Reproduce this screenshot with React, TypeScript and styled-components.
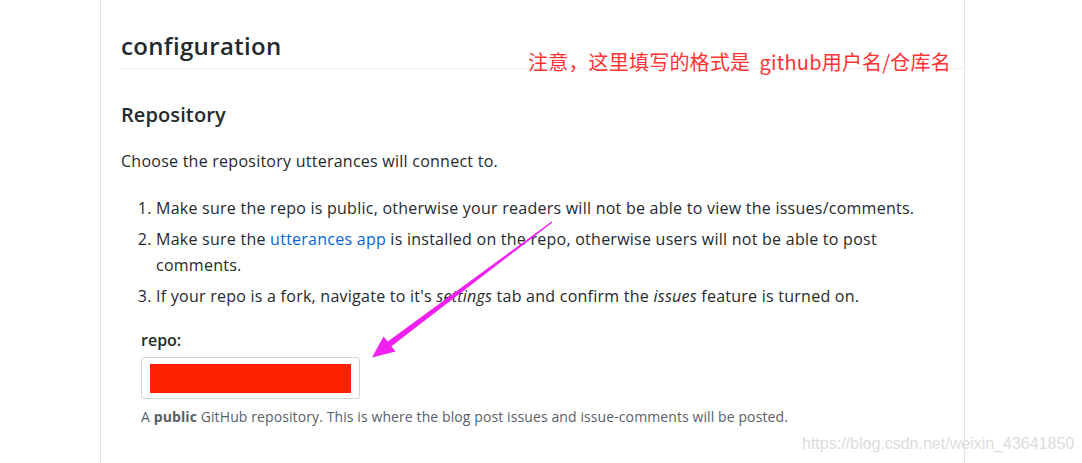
import React from "react";
import styled, { createGlobalStyle } from "styled-components";

const Global = createGlobalStyle`
  html, body { margin: 0; padding: 0; background: #fff; }
  body { width: 1082px; height: 463px; overflow: hidden; }
`;

const Page = styled.div`
  position: relative;
  width: 1082px;
  height: 463px;
  font-family: "Open Sans", "Noto Sans", sans-serif;
  color: #24292e;
`;

const Sheet = styled.main`
  margin-left: 100px;
  width: 865px;
  height: 463px;
  padding: 31px 0 0 20px;
  border-left: 1px solid #e1e4e8;
  border-right: 1px solid #e1e4e8;
  box-sizing: border-box;
`;

const H2 = styled.h2`
  margin: 0;
  font-size: 24px;
  font-weight: 600;
  line-height: 30px;
  letter-spacing: 0.35px;
  padding-bottom: 7px;
  border-bottom: 1px solid #eaecef;
`;

const H3 = styled.h3`
  margin: 32px 0 0;
  font-size: 20px;
  font-weight: 600;
  line-height: 28px;
  letter-spacing: 0.1px;
`;

const P = styled.p`
  margin: 19px 0 0;
  font-size: 16px;
  line-height: 26px;
  letter-spacing: 0.25px;
`;

const List = styled.ol`
  margin: 21px 0 0;
  padding-left: 35px;
  font-size: 16px;
  line-height: 26px;
  letter-spacing: 0.25px;
`;

const Item = styled.li`
  & + & { margin-top: 5px; }
`;

const Link = styled.a`
  color: #0366d6;
  text-decoration: none;
`;

const Field = styled.div`
  margin: 19px 0 0 20px;
  display: flex;
  flex-direction: column;
`;

const Label = styled.label`
  font-size: 16px;
  font-weight: 600;
  line-height: 24px;
`;

const InputBox = styled.div`
  margin-top: 5px;
  width: 209px;
  height: 40px;
  border: 1px solid #d1d5da;
  border-radius: 3px;
  box-sizing: content-box;
  display: flex;
  align-items: center;
  padding-left: 8px;
`;

const Redacted = styled.div`
  width: 201px;
  height: 29px;
  background: #ff2200;
`;

const Note = styled.p`
  margin: 8px 0 0;
  font-size: 14px;
  line-height: 20px;
  letter-spacing: 0.1px;
  color: #586069;
`;

const Annotation = styled.div`
  position: absolute;
  left: 528px;
  top: 48px;
  font-family: "Noto Sans CJK SC", "Open Sans", sans-serif;
  font-size: 20px;
  line-height: 28px;
  letter-spacing: 0.2px;
  color: #ff3333;
  white-space: nowrap;
`;

const Watermark = styled.div`
  position: absolute;
  left: 802px;
  top: 434px;
  font-family: "Liberation Sans", Arial, sans-serif;
  font-size: 16px;
  line-height: 20px;
  color: #dcdcdc;
  white-space: nowrap;
`;

const Overlay = styled.svg`
  position: absolute;
  left: 0;
  top: 0;
  pointer-events: none;
`;

export default function App() {
  return (
    <Page>
      <Global />
      <Sheet>
        <H2>configuration</H2>
        <H3>Repository</H3>
        <P>Choose the repository utterances will connect to.</P>
        <List>
          <Item>
            Make sure the repo is public, otherwise your readers will not be able to view the issues/comments.
          </Item>
          <Item>
            Make sure the <Link href="#">utterances app</Link> is installed on the repo, otherwise users will not be able to post comments.
          </Item>
          <Item>
            If your repo is a fork, navigate to it's <em>settings</em> tab and confirm the <em>issues</em> feature is turned on.
          </Item>
        </List>
        <Field>
          <Label>repo:</Label>
          <InputBox>
            <Redacted />
          </InputBox>
          <Note>
            A <strong>public</strong> GitHub repository. This is where the blog post issues and issue-comments will be posted.
          </Note>
        </Field>
      </Sheet>
      <Annotation>注意，这里填写的格式是&nbsp; github用户名/仓库名</Annotation>
      <Watermark>https://blog.csdn.net/weixin_43641850</Watermark>
      <Overlay width="1082" height="463" viewBox="0 0 1082 463">
        <polygon
          points="552.4,222.5 391.4,346.2 395.5,351.5 372,357.5 383.5,336.5 387.8,341.4 551.6,221.5"
          fill="#f020f0"
        />
      </Overlay>
    </Page>
  );
}
